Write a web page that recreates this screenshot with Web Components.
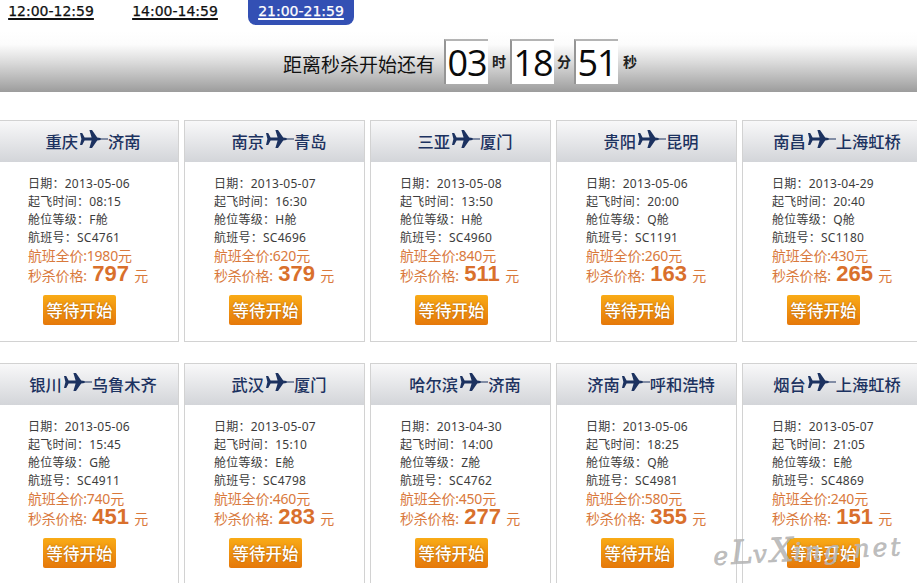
<!DOCTYPE html>
<html lang="zh">
<head>
<meta charset="utf-8">
<title>秒杀</title>
<style>
    html, body { margin: 0; height: 583px; overflow: hidden; background: #fff; }
    body { font-family: "Noto Sans", "Noto Sans CJK SC", sans-serif; position: relative; }
</style>
</head>
<body>
<time-tabs></time-tabs>
<count-down></count-down>
<flight-grid></flight-grid>
<water-mark></water-mark>

<script>
const cjk = '"Noto Sans CJK SC", sans-serif';

class TimeTabs extends HTMLElement {
    connectedCallback() {
        this.attachShadow({ mode: 'open' }).innerHTML = `
            <style>
                :host { display: flex; height: 31px; padding-left: 7px; font: 400 14px/1 "DejaVu Sans", sans-serif; -webkit-text-stroke: .25px currentColor; }
                a { color: #111; text-decoration: underline; text-decoration-thickness: 1.5px; text-underline-offset: 2px; width: 88px; height: 25px; padding-top: 4px; box-sizing: border-box; text-align: center; }
                a + a { margin-left: 36px; }
                a.on { background: #3350b4; color: #fff; border-radius: 0 0 8px 8px; width: 106px; margin-left: 29px; }
            </style>
            <a>12:00-12:59</a><a>14:00-14:59</a><a class="on">21:00-21:59</a>`;
    }
}

class CountDown extends HTMLElement {
    connectedCallback() {
        const box = (n) => `<b>${n}</b>`;
        this.attachShadow({ mode: 'open' }).innerHTML = `
            <style>
                :host { display: flex; align-items: flex-start; height: 61px; padding-left: 283px; box-sizing: border-box;
                    background: linear-gradient(#fff 0, #fcfcfc 22%, #dadada 52%, #b0b0b0 85%, #9c9c9c 100%); font-family: ${cjk}; color: #111; }
                .lead { font-size: 19px; line-height: 26px; margin-top: 20px; width: 161px; white-space: nowrap; }
                b { width: 44px; height: 45px; margin-top: 8px; box-sizing: border-box; background: #fff; border-top: 2px solid #b4b4b4; border-left: 2px solid #959595;
                    font: 400 36px/44px "Open Sans", sans-serif; color: #0a0a0a; text-align: center; letter-spacing: -1px; }
                span { font-size: 14px; font-weight: 700; line-height: 20px; margin-top: 20px; width: 22px; text-align: center; color: #222; }
                span.s { width: 20px; }
            </style>
            <div class="lead">距离秒杀开始还有</div>
            ${box('03')}<span>时</span>${box('18')}<span class="s">分</span>${box('51')}<span style="margin-left:1px">秒</span>`;
    }
}

class PlaneIcon extends HTMLElement {
    connectedCallback() {
        this.attachShadow({ mode: 'open' }).innerHTML = `
            <style>:host { display: inline-block; width: 30px; height: 18px; margin-top: -6px; } svg { display: block; }</style>
            <svg width="30" height="18" viewBox="0 0 30 18" fill="#1c3260">
                <path d="M2 3h2.2l2.4 4.6h7L11.4 0h2.6l5.2 7.4 3.2.5.4.6h7.2v1h-7.2l-.4.6-3.2.5L14 18h-2.6l2.2-7.4h-7L4.2 15H2l1.4-6z"/>
            </svg>`;
    }
}

class FlightCard extends HTMLElement {
    connectedCallback() {
        const d = this.dataset;
        this.attachShadow({ mode: 'open' }).innerHTML = `
            <style>
                :host { display: block; width: 181px; height: 222px; box-sizing: border-box; border: 1px solid #d2d2d2; background: #fff; }
                header { height: 41px; display: flex; align-items: center; justify-content: center; padding-left: 9px; box-sizing: border-box; white-space: nowrap;
                    background: linear-gradient(#f8f8f9, #d3d5d9); color: #1c3260; font: 500 16.3px/1 ${cjk}; }
                .info { padding: 13px 0 0 29px; font-size: 12px; line-height: 18px; color: #3c3c3c; letter-spacing: .25px; font-family: "Noto Sans", ${cjk}; }
                .price { padding-left: 29px; margin-top: -1px; color: #d9793c; font-size: 14px; line-height: 19px; font-family: "Noto Sans", ${cjk}; letter-spacing: -0.2px; }
                .price div:last-child { line-height: 18px; white-space: nowrap; }
                .price strong { font: 700 22px/18px "Liberation Sans", sans-serif; color: #d9702c; margin: 0 2px; letter-spacing: 0; }
                button { display: block; margin: 10px 0 0 44px; width: 73px; height: 30px; padding: 0; border: 0; border-radius: 2px; color: #fff;
                    background: linear-gradient(#f9ab16, #e5780a); font: 500 16.5px/30px ${cjk}; text-shadow: 0 0 2px #a85a00; }
            </style>
            <header><span>${d.from}</span><plane-icon></plane-icon><span>${d.to}</span></header>
            <div class="info">
                <div>日期：${d.date}</div>
                <div>起飞时间：${d.time}</div>
                <div>舱位等级：${d.cls}舱</div>
                <div>航班号：${d.no}</div>
            </div>
            <div class="price">
                <div>航班全价:${d.full}元</div>
                <div>秒杀价格: <strong>${d.sale}</strong> 元</div>
            </div>
            <button>等待开始</button>`;
    }
}

const flights = [
    ['重庆', '济南', '2013-05-06', '08:15', 'F', 'SC4761', 1980, 797],
    ['南京', '青岛', '2013-05-07', '16:30', 'H', 'SC4696', 620, 379],
    ['三亚', '厦门', '2013-05-08', '13:50', 'H', 'SC4960', 840, 511],
    ['贵阳', '昆明', '2013-05-06', '20:00', 'Q', 'SC1191', 260, 163],
    ['南昌', '上海虹桥', '2013-04-29', '20:40', 'Q', 'SC1180', 430, 265],
    ['银川', '乌鲁木齐', '2013-05-06', '15:45', 'G', 'SC4911', 740, 451],
    ['武汉', '厦门', '2013-05-07', '15:10', 'E', 'SC4798', 460, 283],
    ['哈尔滨', '济南', '2013-04-30', '14:00', 'Z', 'SC4762', 450, 277],
    ['济南', '呼和浩特', '2013-05-06', '18:25', 'Q', 'SC4981', 580, 355],
    ['烟台', '上海虹桥', '2013-05-07', '21:05', 'E', 'SC4869', 240, 151],
];

class FlightGrid extends HTMLElement {
    connectedCallback() {
        const root = this.attachShadow({ mode: 'open' });
        root.innerHTML = `
            <style>
                :host { display: grid; grid-template-columns: repeat(5, 181px); column-gap: 5px; row-gap: 21px; width: 925px; margin: 28px 0 0 -2px; }
            </style>`;
        flights.forEach(([from, to, date, time, cls, no, full, sale]) => {
            const card = document.createElement('flight-card');
            Object.assign(card.dataset, { from, to, date, time, cls, no, full, sale });
            root.appendChild(card);
        });
    }
}

class WaterMark extends HTMLElement {
    connectedCallback() {
        this.attachShadow({ mode: 'open' }).innerHTML = `
            <style>
                :host { position: absolute; left: 713px; top: 526px; transform: rotate(-3deg); font: italic 400 25px/1.4 "DejaVu Serif", serif; color: rgba(180,180,180,.85); letter-spacing: 3px; pointer-events: none; white-space: nowrap; -webkit-text-stroke: .7px currentColor; }
                i { font-size: 33px; letter-spacing: 0; }
            </style>e<i>L</i>v<i>X</i>ing.net`;
    }
}

customElements.define('time-tabs', TimeTabs);
customElements.define('count-down', CountDown);
customElements.define('plane-icon', PlaneIcon);
customElements.define('flight-card', FlightCard);
customElements.define('flight-grid', FlightGrid);
customElements.define('water-mark', WaterMark);
</script>
</body>
</html>
